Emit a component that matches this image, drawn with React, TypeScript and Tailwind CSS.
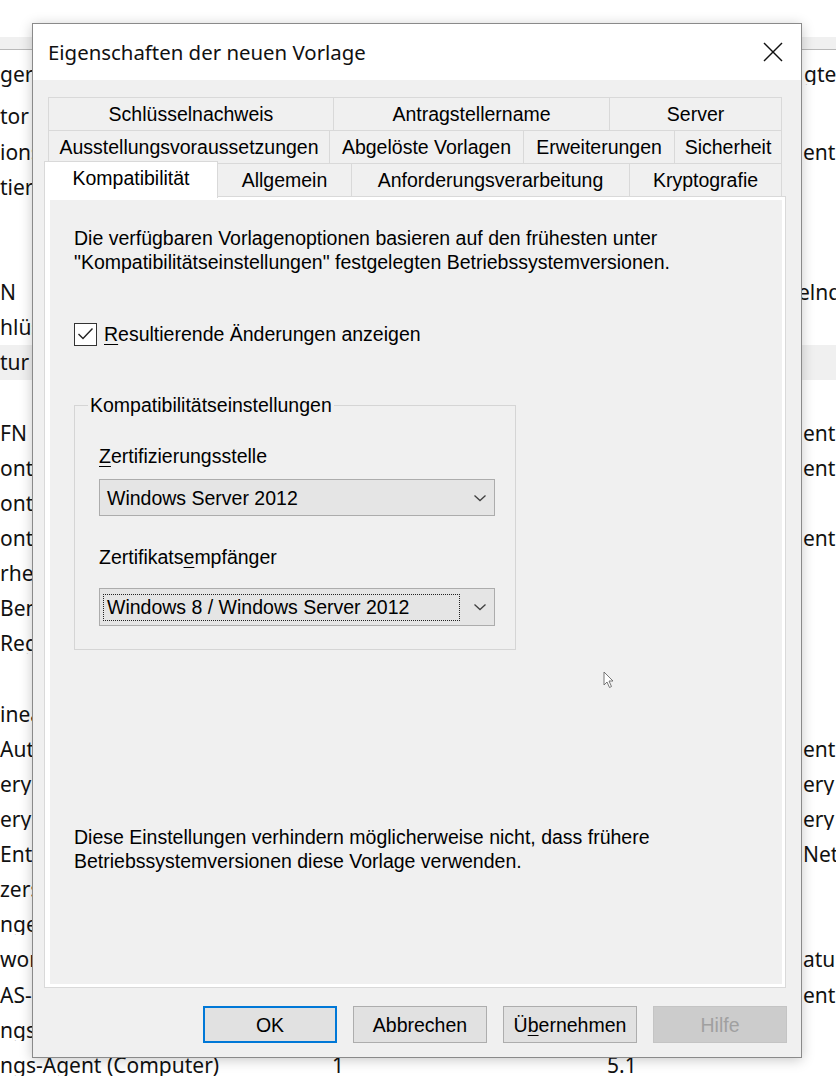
import React from 'react';

type Row = { l?: string; r?: string; rCut?: boolean; hl?: boolean; c2?: string; c3?: string };

const rows: Row[] = [
  { l: 'tor' },
  { l: 'ions', r: 'entifizierung' },
  { l: 'tiert' },
  {},
  {},
  { l: 'N', r: 'elndex', rCut: true },
  { l: 'hlüssel' },
  { l: 'tur', hl: true },
  {},
  { l: 'FN', r: 'entifizierung' },
  { l: 'ontroller', r: 'entifizierung' },
  { l: 'ontroller' },
  { l: 'ontroller', r: 'entifizierung' },
  { l: 'rherstellung' },
  { l: 'Benutzer' },
  { l: 'Registrierung' },
  {},
  { l: 'ineare' },
  { l: 'Authentifizierung', r: 'entifizierung' },
  { l: 'ery Agent', r: 'ery Agent' },
  { l: 'ery Agent', r: 'ery Agent' },
  { l: 'Entschlüsselung', r: 'Netzwerk' },
  { l: 'zerschlüssel' },
  { l: 'nge-Server' },
  { l: 'workstation', r: 'atur' },
  { l: 'AS-Server', r: 'entifizierung' },
  { l: 'ngs-Agent' },
  { l: 'ngs-Agent (Computer)', c2: '1', c3: '5.1' },
];

function Tab({ label, w, last, noLeft }: { label: string; w: string; last?: boolean; noLeft?: boolean }) {
  return (
    <div
      className={`${w} h-full flex items-center justify-center border-t border-[#d9d9d9] bg-[#f0f0f0] whitespace-nowrap ${noLeft ? '' : 'border-l'} ${last ? 'border-r' : ''}`}
    >
      {label}
    </div>
  );
}

function Chevron() {
  return (
    <svg width="14" height="8" viewBox="0 0 14 8" className="shrink-0">
      <polyline points="1.5,1.5 7,6.5 12.5,1.5" fill="none" stroke="#404040" strokeWidth="1.3" />
    </svg>
  );
}

export default function App() {
  return (
    <div className="relative w-[836px] h-[1080px] overflow-hidden bg-white text-black">
      {/* Background list */}
      <div className="font-['Noto_Sans',sans-serif] text-[21px] leading-none text-[#111]">
        <div className="h-[37px]" />
        <div className="h-[13px] bg-[#f0f0f0] border-b border-[#b9b9b9]" />
        <div className="h-[49.4px] grid grid-cols-[802px_34px] items-center whitespace-nowrap overflow-hidden">
          <div>ger</div>
          <div className="pl-[2px] overflow-hidden">gte Zertifikatvorlage</div>
        </div>
        {rows.map((r, i) => (
          <div
            key={i}
            className={`h-[35.13px] grid grid-cols-[330px_275px_197px_34px] items-center whitespace-nowrap overflow-hidden ${r.hl ? 'bg-[#f0f0f0]' : ''}`}
          >
            <div className="overflow-hidden">{r.l ?? ''}</div>
            <div className="pl-[2px]">{r.c2 ?? ''}</div>
            <div className="pl-[2px]">{r.c3 ?? ''}</div>
            <div className={`overflow-hidden ${r.rCut ? '-ml-[4px]' : 'pl-[1px]'}`}>{r.r ?? ''}</div>
          </div>
        ))}
      </div>

      {/* Dialog */}
      <div className="absolute left-[32px] top-[23px] w-[770px] h-[1035px] flex flex-col bg-[#f0f0f0] border border-[#8a8a8a] shadow-[0_2px_12px_rgba(0,0,0,0.22)] font-['Liberation_Sans',Arial,sans-serif] text-[19.5px] leading-[24px] text-black">
        <div className="h-[56px] shrink-0 bg-white flex items-center justify-between pl-[15px] pr-[18px]">
          <span className="font-['Noto_Sans',sans-serif] text-[20.4px] text-[#111]">Eigenschaften der neuen Vorlage</span>
          <svg width="20" height="20" viewBox="0 0 20 20">
            <line x1="1" y1="1" x2="19" y2="19" stroke="#111" strokeWidth="1.4" />
            <line x1="19" y1="1" x2="1" y2="19" stroke="#111" strokeWidth="1.4" />
          </svg>
        </div>

        <div className="flex-1 flex flex-col pl-[11px] pr-[14px] pt-[17px]">
          {/* Tabs */}
          <div className="w-[742px] flex flex-col">
            <div className="flex ml-[4px] h-[33px]">
              <Tab label="Schlüsselnachweis" w="w-[285px]" />
              <Tab label="Antragstellername" w="w-[276px]" />
              <Tab label="Server" w="w-[173px]" last />
            </div>
            <div className="flex ml-[4px] h-[33px]">
              <Tab label="Ausstellungsvoraussetzungen" w="w-[281px]" />
              <Tab label="Abgelöste Vorlagen" w="w-[194px]" />
              <Tab label="Erweiterungen" w="w-[151px]" />
              <Tab label="Sicherheit" w="w-[108px]" last />
            </div>
            <div className="flex items-end h-[33px] relative z-10">
              <div className="w-[174px] h-[37px] -mb-[2px] pb-[4px] flex items-center justify-center bg-white border-t border-l border-r border-[#d9d9d9]">
                Kompatibilität
              </div>
              <Tab label="Allgemein" w="w-[133px]" noLeft />
              <Tab label="Anforderungsverarbeitung" w="w-[278px]" />
              <Tab label="Kryptografie" w="w-[153px]" last />
            </div>
          </div>

          {/* Pane */}
          <div className="w-[742px] h-[792px] shrink-0 flex border border-[#d9d9d9] bg-white pt-[3px] pl-[5px] pr-[3px] pb-[3px]">
            <div className="flex-1 flex flex-col bg-[#f0f0f0] pl-[24px]">
              <p className="mt-[26px]">
                Die verfügbaren Vorlagenoptionen basieren auf den frühesten unter
                <br />
                "Kompatibilitätseinstellungen" festgelegten Betriebssystemversionen.
              </p>

              <div className="mt-[48px] h-[24px] flex items-center gap-[7px]">
                <span className="w-[23px] h-[23px] border border-[#333] bg-white flex items-center justify-center">
                  <svg width="17" height="14" viewBox="0 0 17 14">
                    <polyline points="1.5,7 6,11.5 15.5,1.5" fill="none" stroke="#222" strokeWidth="1.4" />
                  </svg>
                </span>
                <span>
                  <u className="underline-offset-[3px]">R</u>esultierende Änderungen anzeigen
                </span>
              </div>

              <fieldset className="mt-[47px] w-[442px] border border-[#d5d5d5] p-0">
                <legend className="ml-[13px] px-[2px]">Kompatibilitätseinstellungen</legend>
                <div className="flex flex-col pl-[24px] pr-[20px] pb-[23px]">
                  <div className="mt-[27px]">
                    <u className="underline-offset-[3px]">Z</u>ertifizierungsstelle
                  </div>
                  <div className="mt-[11px] h-[37px] flex items-center justify-between bg-[#e5e5e5] border border-[#acacac] pl-[7px] pr-[7px]">
                    <span>Windows Server 2012</span>
                    <Chevron />
                  </div>
                  <div className="mt-[29px]">
                    Zertifikats<u className="underline-offset-[3px]">e</u>mpfänger
                  </div>
                  <div className="mt-[19px] h-[38px] flex items-center justify-between bg-[#e5e5e5] border border-[#acacac] pl-[3px] pr-[7px]">
                    <span className="w-[357px] h-[27px] flex items-center pl-[3px] border border-dotted border-[#222]">
                      Windows 8 / Windows Server 2012
                    </span>
                    <Chevron />
                  </div>
                </div>
              </fieldset>

              <p className="mt-[175px]">
                Diese Einstellungen verhindern möglicherweise nicht, dass frühere
                <br />
                Betriebssystemversionen diese Vorlage verwenden.
              </p>
            </div>
          </div>

          {/* Buttons */}
          <div className="mt-[18px] flex justify-end gap-[16px]">
            <button className="w-[134px] h-[37px] bg-[#e1e1e1] border-2 border-[#0078d7] flex items-center justify-center">OK</button>
            <button className="w-[134px] h-[37px] bg-[#e1e1e1] border border-[#adadad] flex items-center justify-center">Abbrechen</button>
            <button className="w-[134px] h-[37px] bg-[#e1e1e1] border border-[#adadad] flex items-center justify-center">
              <span>
                Ü<u className="underline-offset-[3px]">b</u>ernehmen
              </span>
            </button>
            <button className="w-[134px] h-[37px] bg-[#cccccc] border border-[#c4c4c4] text-[#a0a0a0] flex items-center justify-center">Hilfe</button>
          </div>
        </div>
      </div>

      {/* Mouse cursor */}
      <svg className="absolute left-[603px] top-[671px]" width="12" height="18" viewBox="0 0 12 18">
        <path d="M1 1 L1 14 L4 11 L6.5 16.5 L8.5 15.5 L6 10 L10 10 Z" fill="#fff" stroke="#666" strokeWidth="0.9" strokeLinejoin="round" />
      </svg>
    </div>
  );
}
